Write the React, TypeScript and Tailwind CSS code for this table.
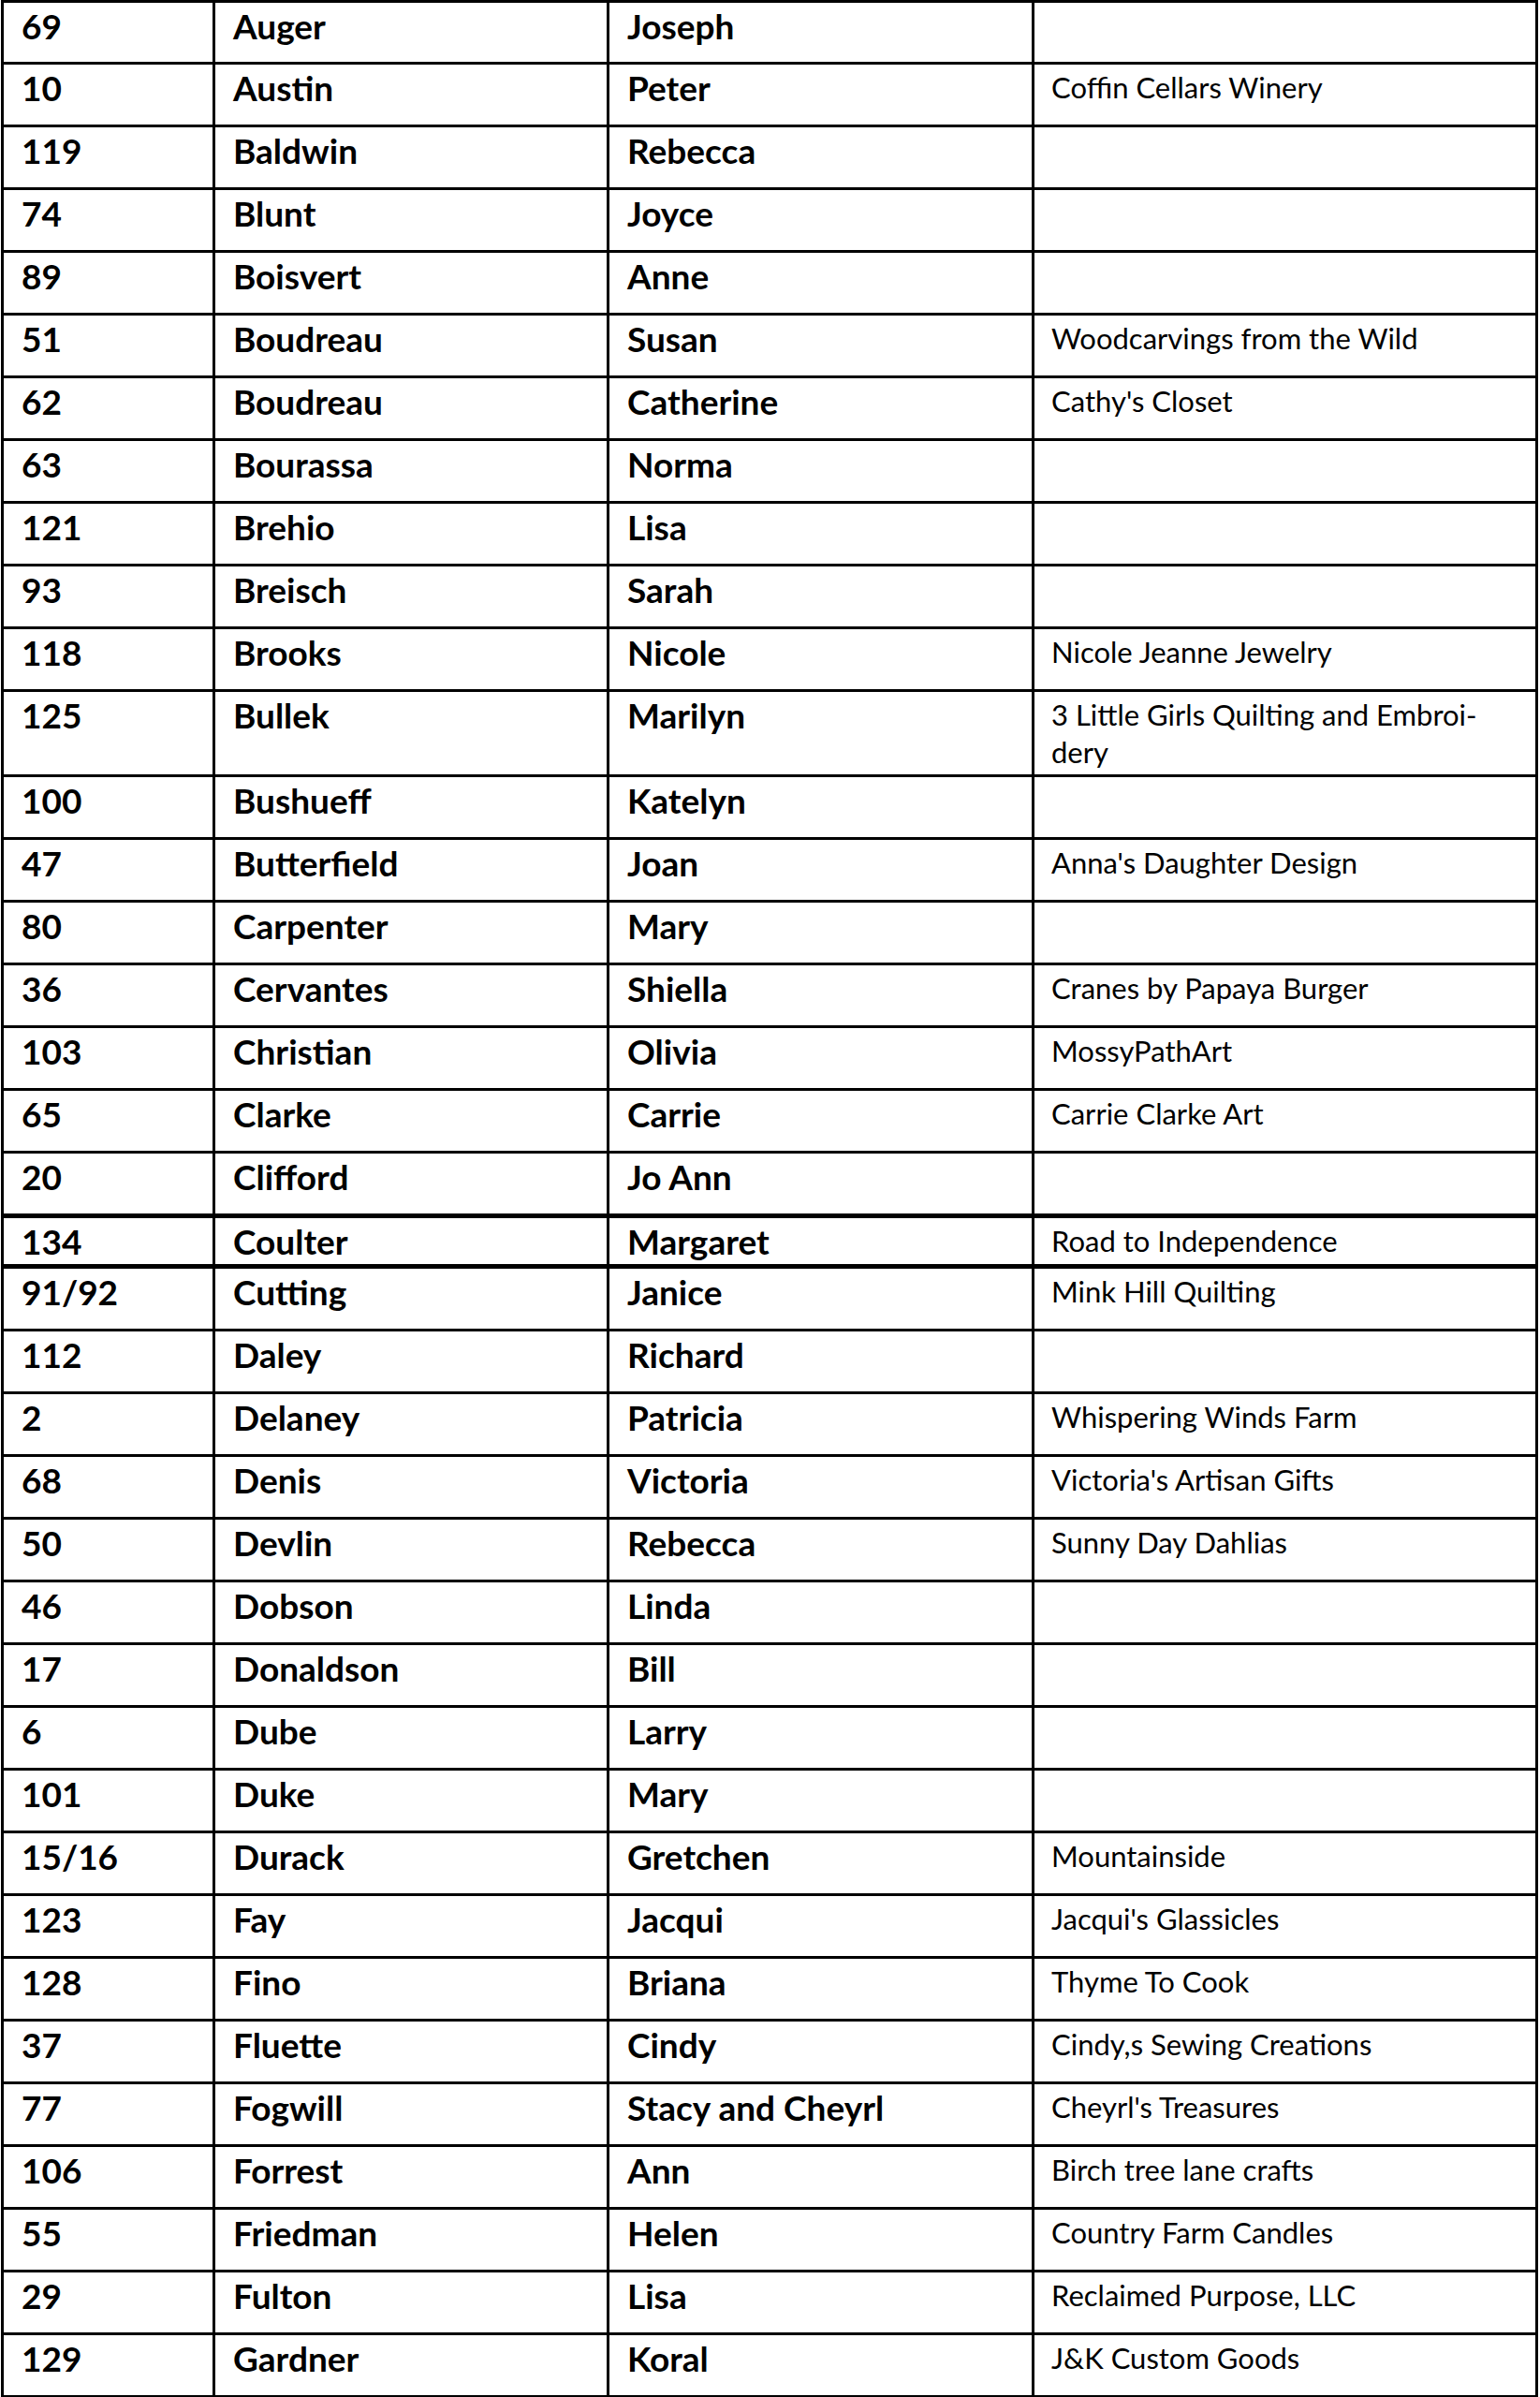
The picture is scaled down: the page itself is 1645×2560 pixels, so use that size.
type Vendor = {
  booth: string;
  last: string;
  first: string;
  business?: string;
};

const vendors: Vendor[] = [
  { booth: "69", last: "Auger", first: "Joseph" },
  { booth: "10", last: "Austin", first: "Peter", business: "Coffin Cellars Winery" },
  { booth: "119", last: "Baldwin", first: "Rebecca" },
  { booth: "74", last: "Blunt", first: "Joyce" },
  { booth: "89", last: "Boisvert", first: "Anne" },
  { booth: "51", last: "Boudreau", first: "Susan", business: "Woodcarvings from the Wild" },
  { booth: "62", last: "Boudreau", first: "Catherine", business: "Cathy's Closet" },
  { booth: "63", last: "Bourassa", first: "Norma" },
  { booth: "121", last: "Brehio", first: "Lisa" },
  { booth: "93", last: "Breisch", first: "Sarah" },
  { booth: "118", last: "Brooks", first: "Nicole", business: "Nicole Jeanne Jewelry" },
  { booth: "125", last: "Bullek", first: "Marilyn", business: "3 Little Girls Quilting and Embroi-|dery" },
  { booth: "100", last: "Bushueff", first: "Katelyn" },
  { booth: "47", last: "Butterfield", first: "Joan", business: "Anna's Daughter Design" },
  { booth: "80", last: "Carpenter", first: "Mary" },
  { booth: "36", last: "Cervantes", first: "Shiella", business: "Cranes by Papaya Burger" },
  { booth: "103", last: "Christian", first: "Olivia", business: "MossyPathArt" },
  { booth: "65", last: "Clarke", first: "Carrie", business: "Carrie Clarke Art" },
  { booth: "20", last: "Clifford", first: "Jo Ann" },
  { booth: "134", last: "Coulter", first: "Margaret", business: "Road to Independence" },
  { booth: "91/92", last: "Cutting", first: "Janice", business: "Mink Hill Quilting" },
  { booth: "112", last: "Daley", first: "Richard" },
  { booth: "2", last: "Delaney", first: "Patricia", business: "Whispering Winds Farm" },
  { booth: "68", last: "Denis", first: "Victoria", business: "Victoria's Artisan Gifts" },
  { booth: "50", last: "Devlin", first: "Rebecca", business: "Sunny Day Dahlias" },
  { booth: "46", last: "Dobson", first: "Linda" },
  { booth: "17", last: "Donaldson", first: "Bill" },
  { booth: "6", last: "Dube", first: "Larry" },
  { booth: "101", last: "Duke", first: "Mary" },
  { booth: "15/16", last: "Durack", first: "Gretchen", business: "Mountainside" },
  { booth: "123", last: "Fay", first: "Jacqui", business: "Jacqui's Glassicles" },
  { booth: "128", last: "Fino", first: "Briana", business: "Thyme To Cook" },
  { booth: "37", last: "Fluette", first: "Cindy", business: "Cindy,s Sewing Creations" },
  { booth: "77", last: "Fogwill", first: "Stacy and Cheyrl", business: "Cheyrl's Treasures" },
  { booth: "106", last: "Forrest", first: "Ann", business: "Birch tree lane crafts" },
  { booth: "55", last: "Friedman", first: "Helen", business: "Country Farm Candles" },
  { booth: "29", last: "Fulton", first: "Lisa", business: "Reclaimed Purpose, LLC" },
  { booth: "129", last: "Gardner", first: "Koral", business: "J&K Custom Goods" },
];

// row heights follow the printed page: first row is a px shorter, the wrapped row is taller,
// and the "134" row sits on a page break with heavier rules
const rowClass = (i: number) => {
  if (i === 0) return "h-[66px]";
  if (i === 11) return "h-[91px]";
  if (i === 19) return "h-[56px] border-t-[2px] border-black";
  return "h-[67px]";
};

const cellClass = (i: number) =>
  i === 19 ? "border-r-[3px] border-b-[5px] border-black" : "border-r-[3px] border-b-[3px] border-black";

const BoldCell = ({ text, i }: { text: string; i: number }) => (
  <div className={`${cellClass(i)} pl-[19px] pt-[4px] text-[37px] leading-[42px] font-bold whitespace-nowrap`}>
    {text}
  </div>
);

export default function App() {
  return (
    <div className="min-h-screen bg-white text-black font-['Lato','Open_Sans',sans-serif]">
      <div className="ml-px w-[1642px] border-l-[3px] border-t-[3px] border-black">
        {vendors.map((v, i) => (
          <div key={i} className={`grid grid-cols-[226px_421px_454px_538px] ${rowClass(i)}`}>
            <BoldCell text={v.booth} i={i} />
            <BoldCell text={v.last} i={i} />
            <BoldCell text={v.first} i={i} />
            <div className={`${cellClass(i)} pl-[18px] pt-[4px] text-[31px] leading-[40px] whitespace-nowrap`}>
              {v.business &&
                v.business.split("|").map((line, j) => <div key={j}>{line}</div>)}
            </div>
          </div>
        ))}
      </div>
    </div>
  );
}
